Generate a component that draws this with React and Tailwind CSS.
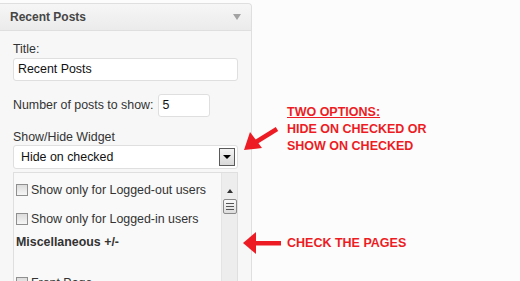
import React from 'react';

function Checkbox() {
  return <span className="inline-block w-[12px] h-[12px] border border-[#8f8f8f] bg-gradient-to-b from-[#dcdcdc] to-[#f6f6f6] shrink-0" />;
}

function Arrows() {
  return (
    <svg className="absolute left-0 top-0 pointer-events-none" width="520" height="281">
      {/* diagonal arrow */}
      <line x1="277" y1="129" x2="256" y2="142" stroke="#ed1c24" strokeWidth="4.5" />
      <polygon points="244,150 250,132 262,148" fill="#ed1c24" />
      {/* horizontal arrow */}
      <rect x="254" y="241" width="27" height="4.5" fill="#ed1c24" />
      <polygon points="243,243 256,232 256,254" fill="#ed1c24" />
    </svg>
  );
}

export default function App() {
  const font = { fontFamily: '"Liberation Sans", Arial, sans-serif' };
  return (
    <div className="relative w-[520px] h-[281px] overflow-hidden bg-[#fcfcfc] flex items-start" style={font}>
      <div className="w-[252px] shrink-0 mt-[3px] border-r border-t border-[#dfdfdf] rounded-tr-[4px] bg-[#f7f7f7] flex flex-col min-h-[300px]">
        {/* header */}
        <div className="h-[27px] shrink-0 flex items-center justify-between pl-[10px] pr-[10px] bg-gradient-to-b from-[#f6f6f6] to-[#ebebeb] border-b border-[#dfdfdf] rounded-tr-[4px]">
          <span className="text-[12px] font-bold text-[#464646] leading-none">Recent Posts</span>
          <span className="w-0 h-0 border-l-[4px] border-r-[4px] border-t-[6px] border-l-transparent border-r-transparent border-t-[#a3a3a3]" />
        </div>

        <div className="px-[13px] pt-[10px] text-[12.4px] text-[#333] flex flex-col shrink-0">
          <label className="leading-[16px]">Title:</label>
          <div className="mt-[1px] h-[23px] bg-white border border-[#dfdfdf] rounded-[3px] flex items-center px-[4px] text-[#111]">Recent Posts</div>

          <div className="mt-[13px] flex items-center gap-[4px]">
            <span>Number of posts to show:</span>
            <div className="w-[52px] h-[23px] bg-white border border-[#dfdfdf] rounded-[3px] flex items-center px-[4px] text-[#111]">5</div>
          </div>

          <label className="mt-[12px] leading-[16px]">Show/Hide Widget</label>
          <div className="h-[24px] bg-white border border-[#dfdfdf] rounded-[3px] flex items-center justify-between pl-[7px] pr-[2px] text-[#111]">
            <span>Hide on checked</span>
            <span className="w-[16px] h-[18px] border border-[#5a5a5a] bg-gradient-to-b from-[#f4f4f4] to-[#d8d8d8] flex items-center justify-center">
              <span className="w-0 h-0 border-l-[4px] border-r-[4px] border-t-[4px] border-l-transparent border-r-transparent border-t-black" />
            </span>
          </div>

          <div className="mt-[3px] h-[120px] border border-[#dfdfdf] border-b-0 bg-[#f9f9f9] flex">
            <div className="flex-1 pl-[2px] pt-[10px] flex flex-col">
              <div className="flex items-center gap-[3px] h-[14px]">
                <Checkbox />
                <span>Show only for Logged-out users</span>
              </div>
              <div className="mt-[15px] flex items-center gap-[3px] h-[14px]">
                <Checkbox />
                <span>Show only for Logged-in users</span>
              </div>
              <div className="mt-[9px] h-[14px] flex items-center font-bold">Miscellaneous +/-</div>
              <div className="mt-[27px] flex items-center gap-[3px] h-[14px]">
                <Checkbox />
                <span>Front Page</span>
              </div>
            </div>
            <div className="w-[16px] bg-[#ededed] border-l border-[#e4e4e4] flex flex-col items-center pt-[16px]">
              <span className="w-0 h-0 border-l-[3px] border-r-[3px] border-b-[4px] border-l-transparent border-r-transparent border-b-[#333]" />
              <div className="mt-[6px] w-[14px] h-[15px] border border-[#8a8a8a] rounded-[2px] bg-gradient-to-b from-[#fafafa] to-[#dcdcdc] flex flex-col items-center justify-center gap-[2px]">
                <span className="w-[8px] h-[1px] bg-[#555]" />
                <span className="w-[8px] h-[1px] bg-[#555]" />
                <span className="w-[8px] h-[1px] bg-[#555]" />
              </div>
            </div>
          </div>
        </div>
      </div>

      <div className="flex-1 pl-[35px] pt-[104px] text-[12.5px] font-bold text-[#ed1c24] leading-[17px]">
        <div className="underline underline-offset-[1px]">TWO OPTIONS:</div>
        <div>HIDE ON CHECKED OR</div>
        <div>SHOW ON CHECKED</div>
        <div className="mt-[80px]">CHECK THE PAGES</div>
      </div>

      <Arrows />
    </div>
  );
}
